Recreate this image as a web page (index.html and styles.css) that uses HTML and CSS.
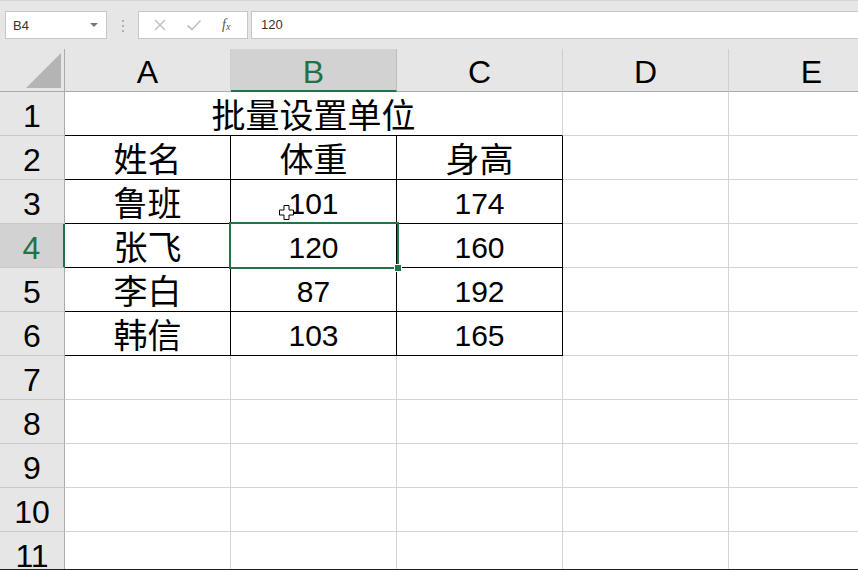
FILE: index.html
```html
<!DOCTYPE html>
<html lang="zh">
<head>
<meta charset="utf-8">
<link rel="stylesheet" href="styles.css">
</head>
<body>
<div class="app">
  <div class="fbar">
    <div class="namebox"><span class="nb-text">B4</span><span class="nb-arrow"></span></div>
    <div class="grip"><i></i><i></i><i></i></div>
    <div class="fbtns">
      <svg class="ic" width="14" height="14" viewBox="0 0 14 14"><path d="M2 2 L12 12 M12 2 L2 12" stroke="#c3c3c3" stroke-width="1.6" fill="none"/></svg>
      <svg class="ic" width="16" height="14" viewBox="0 0 16 14"><path d="M1.5 7.5 L6 11.5 L14.5 2.5" stroke="#c3c3c3" stroke-width="1.8" fill="none"/></svg>
      <span class="fx">f<sub>x</sub></span>
    </div>
    <div class="finput">120</div>
  </div>
  <div class="sheet">
    <div class="grid">
      <div class="corner"><span class="tri"></span></div>
      <div class="ch">A</div>
      <div class="ch sel">B</div>
      <div class="ch">C</div>
      <div class="ch">D</div>
      <div class="ch">E</div>

      <div class="rh">1</div>
      <div class="c merged"><span class="zh">批量设置单位</span></div>
      <div class="c"></div>
      <div class="c"></div>

      <div class="rh">2</div>
      <div class="c t"><span class="zh">姓名</span></div>
      <div class="c t"><span class="zh">体重</span></div>
      <div class="c t"><span class="zh">身高</span></div>
      <div class="c"></div>
      <div class="c"></div>

      <div class="rh">3</div>
      <div class="c t"><span class="zh">鲁班</span></div>
      <div class="c t">101</div>
      <div class="c t">174</div>
      <div class="c"></div>
      <div class="c"></div>

      <div class="rh sel">4</div>
      <div class="c t"><span class="zh">张飞</span></div>
      <div class="c t">120</div>
      <div class="c t">160</div>
      <div class="c"></div>
      <div class="c"></div>

      <div class="rh">5</div>
      <div class="c t"><span class="zh">李白</span></div>
      <div class="c t">87</div>
      <div class="c t">192</div>
      <div class="c"></div>
      <div class="c"></div>

      <div class="rh">6</div>
      <div class="c t"><span class="zh">韩信</span></div>
      <div class="c t">103</div>
      <div class="c t">165</div>
      <div class="c"></div>
      <div class="c"></div>

      <div class="rh">7</div><div class="c"></div><div class="c"></div><div class="c"></div><div class="c"></div><div class="c"></div>
      <div class="rh">8</div><div class="c"></div><div class="c"></div><div class="c"></div><div class="c"></div><div class="c"></div>
      <div class="rh">9</div><div class="c"></div><div class="c"></div><div class="c"></div><div class="c"></div><div class="c"></div>
      <div class="rh">10</div><div class="c"></div><div class="c"></div><div class="c"></div><div class="c"></div><div class="c"></div>
      <div class="rh">11</div><div class="c"></div><div class="c"></div><div class="c"></div><div class="c"></div><div class="c"></div>
    </div>
    <div class="selbox"><span class="handle"></span></div>
    <svg class="cursor" width="15" height="15" viewBox="0 0 15 15"><path d="M5 0.5 H10 V5 H14.5 V10 H10 V14.5 H5 V10 H0.5 V5 H5 Z" fill="#fff" stroke="#000" stroke-width="1"/></svg>
  </div>
  <div class="bottomline"></div>
</div>
</body>
</html>
```

FILE: styles.css
```css
html, body {
  margin: 0;
  padding: 0;
  background: #e6e6e6;
}
body {
  width: 858px;
  height: 570px;
  overflow: hidden;
  font-family: "Liberation Sans", Arial, "Noto Sans CJK SC", sans-serif;
}
.app {
  width: 858px;
  height: 570px;
  overflow: hidden;
  position: relative;
  background: #e6e6e6;
}
.fbar {
  height: 49px;
  display: flex;
  align-items: flex-start;
  padding-top: 11px;
  padding-left: 5px;
  box-sizing: border-box;
  border-top: 1px solid #d6d6d6;
}
.namebox {
  width: 102px;
  height: 28px;
  box-sizing: border-box;
  border: 1px solid #c6c6c6;
  background: #fff;
  display: flex;
  align-items: center;
  justify-content: space-between;
  padding: 0 8px 0 7px;
  margin-top: -1px;
}
.nb-text {
  font-size: 13px;
  color: #333;
}
.nb-arrow {
  width: 0;
  height: 0;
  border-left: 4px solid transparent;
  border-right: 4px solid transparent;
  border-top: 4px solid #777;
}
.grip {
  width: 31px;
  height: 27px;
  display: flex;
  flex-direction: column;
  align-items: center;
  justify-content: center;
  gap: 3px;
}
.grip i {
  display: block;
  width: 2px;
  height: 2px;
  background: #b0b0b0;
}
.fbtns {
  width: 110px;
  height: 28px;
  box-sizing: border-box;
  border: 1px solid #c6c6c6;
  background: #fff;
  display: flex;
  align-items: center;
  padding-left: 14px;
  gap: 19px;
  margin-top: -1px;
}
.fx {
  font-family: "Liberation Serif", "Times New Roman", serif;
  font-style: italic;
  font-size: 14px;
  color: #555;
  margin-left: 1px;
}
.fx sub {
  font-size: 10px;
  vertical-align: -1px;
}
.finput {
  margin-left: 3px;
  flex: 1;
  height: 28px;
  box-sizing: border-box;
  border: 1px solid #c6c6c6;
  border-right: none;
  background: #fff;
  font-size: 13px;
  color: #333;
  line-height: 26px;
  padding-left: 9px;
  margin-top: -1px;
}
.sheet {
  position: relative;
}
.grid {
  display: grid;
  grid-template-columns: 65px repeat(5, 166px);
  grid-template-rows: 43px;
  grid-auto-rows: 44px;
  width: 895px;
  background: #fff;
}
.corner {
  background: #e6e6e6;
  border-right: 1px solid #ababab;
  border-bottom: 1px solid #ababab;
  box-sizing: border-box;
  position: relative;
}
.tri {
  position: absolute;
  right: 3px;
  bottom: 3px;
  width: 0;
  height: 0;
  border-left: 35px solid transparent;
  border-bottom: 35px solid #b4b4b4;
}
.ch {
  background: #e6e6e6;
  box-sizing: border-box;
  border-right: 1px solid #cfcfcf;
  border-bottom: 1px solid #ababab;
  text-align: center;
  font-size: 32px;
  line-height: 40px;
  padding-top: 3px;
  color: #000;
}
.ch.sel {
  background: #d2d2d2;
  color: #217346;
  border-bottom: 2px solid #217346;
  border-right-color: #bdbdbd;
}
.rh {
  background: #e6e6e6;
  box-sizing: border-box;
  border-right: 1px solid #ababab;
  border-bottom: 1px solid #c9c9c9;
  text-align: center;
  font-size: 32px;
  line-height: 40px;
  padding-top: 4px;
  color: #000;
}
.rh.sel {
  background: #d2d2d2;
  color: #217346;
  border-right: 2px solid #217346;
}
.c {
  box-sizing: border-box;
  border-right: 1px solid #d4d4d4;
  border-bottom: 1px solid #d4d4d4;
  text-align: center;
  font-size: 30px;
  line-height: 36px;
  padding-top: 6px;
  color: #000;
  white-space: nowrap;
}
.zh {
  font-size: 34px;
}
.c.merged {
  grid-column: span 3;
  border-bottom-color: #000;
}
.c.t {
  border-right-color: #000;
  border-bottom-color: #000;
}
.selbox {
  position: absolute;
  left: 229px;
  top: 173px;
  width: 170px;
  height: 47px;
  box-sizing: border-box;
  border: 2px solid #217346;
}
.handle {
  position: absolute;
  right: -5px;
  bottom: -5px;
  width: 6px;
  height: 6px;
  background: #217346;
  border: 1px solid #fff;
}
.cursor {
  position: absolute;
  left: 279px;
  top: 156px;
}
.bottomline {
  position: absolute;
  left: 0;
  right: 0;
  bottom: 0;
  height: 1px;
  background: #222;
}
```
